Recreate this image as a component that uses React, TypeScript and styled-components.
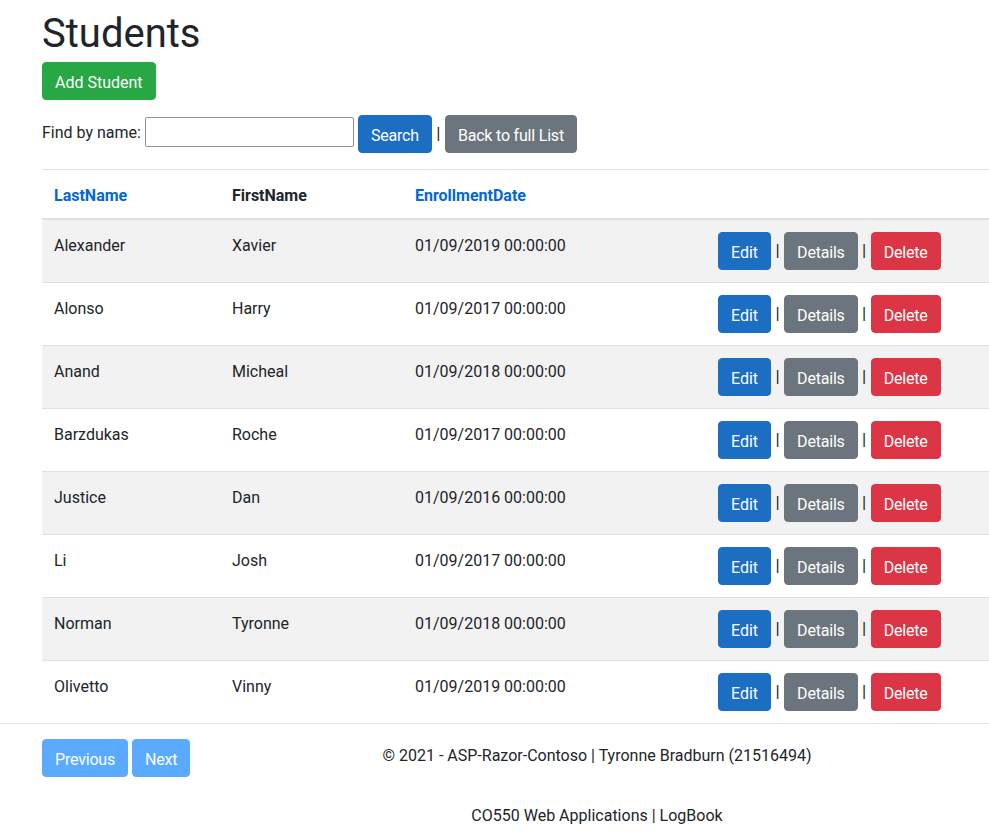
import React from "react";
import styled, { createGlobalStyle, css } from "styled-components";

const Global = createGlobalStyle`
  html, body { margin: 0; padding: 0; overflow: hidden; background: #fff; }
  body {
    font-family: Roboto, "Liberation Sans", sans-serif;
    font-size: 16px;
    line-height: 1.5;
    color: #212529;
  }
  * { box-sizing: border-box; }
`;

const Page = styled.div`
  width: 1224px;
`;

const Container = styled.main`
  width: 1110px;
  margin-left: 42px;
  padding-top: 10px;
`;

const Title = styled.h1`
  margin: 0 0 4px;
  font-size: 40px;
  font-weight: 400;
  line-height: 48px;
`;

type Variant = "primary" | "secondary" | "danger" | "success" | "light";

const colors: Record<Variant, string> = {
  primary: "#1b6ec2",
  secondary: "#6c757d",
  danger: "#dc3545",
  success: "#28a745",
  light: "#5aabff",
};

const Button = styled.button<{ $variant: Variant; $tight?: boolean }>`
  display: inline-block;
  font-family: inherit;
  font-size: 16px;
  line-height: 24px;
  letter-spacing: ${({ $tight }) => ($tight ? "-0.2px" : "0")};
  padding: 8px 12px 4px;
  border-radius: 4px;
  color: #fff;
  cursor: pointer;
  ${({ $variant }) => css`
    background: ${colors[$variant]};
    border: 1px solid ${colors[$variant]};
  `}
`;

const FormRow = styled.form`
  display: flex;
  align-items: center;
  margin-top: 15px;
  height: 38px;
`;

const Label = styled.span`
  margin-bottom: 2px;
  margin-right: 4px;
`;

const Input = styled.input`
  width: 209px;
  height: 30px;
  margin-bottom: 4px;
  margin-right: 4px;
  border: 1px solid #8f8f9d;
  border-radius: 2px;
  font-size: 16px;
`;

const Sep = styled.span`
  display: inline-block;
  width: 13px;
  text-align: center;
  font-size: 17px;
`;

const Table = styled.table`
  width: 1110px;
  margin-top: 16px;
  border-collapse: collapse;
  table-layout: fixed;
`;

const Th = styled.th<{ $link?: boolean }>`
  padding: 14px 12px 10px;
  text-align: left;
  vertical-align: bottom;
  font-weight: 700;
  border-top: 1px solid #dee2e6;
  border-bottom: 2px solid #dee2e6;
  color: ${({ $link }) => ($link ? "#0366d6" : "#212529")};
`;

const Tr = styled.tr<{ $striped: boolean }>`
  background: ${({ $striped }) => ($striped ? "#f2f2f2" : "transparent")};
`;

const Td = styled.td`
  padding: 14px 12px 10px;
  vertical-align: top;
  border-top: 1px solid #dee2e6;
`;

const Actions = styled.div`
  display: flex;
  align-items: center;
  margin: -2px 0 2px;
`;

const Footer = styled.footer`
  border-top: 1px solid #dee2e6;
`;

const FooterInner = styled.div`
  width: 1110px;
  margin-left: 42px;
  padding-top: 2px;
  line-height: 60px;
  text-align: center;
`;

const FooterFirst = styled.div`
  display: grid;
  grid-template-columns: 1fr auto 1fr;
`;

const Pager = styled.div`
  display: flex;
  gap: 4px;
  align-self: start;
  margin-top: 13px;
  line-height: 24px;
`;

const students = [
  ["Alexander", "Xavier", "01/09/2019 00:00:00"],
  ["Alonso", "Harry", "01/09/2017 00:00:00"],
  ["Anand", "Micheal", "01/09/2018 00:00:00"],
  ["Barzdukas", "Roche", "01/09/2017 00:00:00"],
  ["Justice", "Dan", "01/09/2016 00:00:00"],
  ["Li", "Josh", "01/09/2017 00:00:00"],
  ["Norman", "Tyronne", "01/09/2018 00:00:00"],
  ["Olivetto", "Vinny", "01/09/2019 00:00:00"],
];

export default function App() {
  return (
    <Page>
      <Global />
      <Container>
        <Title>Students</Title>
        <Button $variant="success">Add Student</Button>
        <FormRow onSubmit={(e) => e.preventDefault()}>
          <Label>Find by name:</Label>
          <Input type="text" />
          <Button $variant="primary" $tight>Search</Button>
          <Sep>|</Sep>
          <Button $variant="secondary" $tight>Back to full List</Button>
        </FormRow>
        <Table>
          <colgroup>
            <col style={{ width: 178 }} />
            <col style={{ width: 183 }} />
            <col style={{ width: 303 }} />
            <col />
          </colgroup>
          <thead>
            <tr>
              <Th $link>LastName</Th>
              <Th>FirstName</Th>
              <Th $link>EnrollmentDate</Th>
              <Th></Th>
            </tr>
          </thead>
          <tbody>
            {students.map(([last, first, date], i) => (
              <Tr key={last} $striped={i % 2 === 0}>
                <Td>{last}</Td>
                <Td>{first}</Td>
                <Td>{date}</Td>
                <Td>
                  <Actions>
                    <Button $variant="primary">Edit</Button>
                    <Sep>|</Sep>
                    <Button $variant="secondary" $tight>Details</Button>
                    <Sep>|</Sep>
                    <Button $variant="danger" $tight>Delete</Button>
                  </Actions>
                </Td>
              </Tr>
            ))}
          </tbody>
        </Table>
      </Container>
      <Footer>
        <FooterInner>
          <FooterFirst>
            <Pager>
              <Button $variant="light" $tight>Previous</Button>
              <Button $variant="light" $tight>Next</Button>
            </Pager>
            <div>© 2021 - ASP-Razor-Contoso | Tyronne Bradburn (21516494)</div>
            <div />
          </FooterFirst>
          <div>CO550 Web Applications | LogBook</div>
        </FooterInner>
      </Footer>
    </Page>
  );
}
